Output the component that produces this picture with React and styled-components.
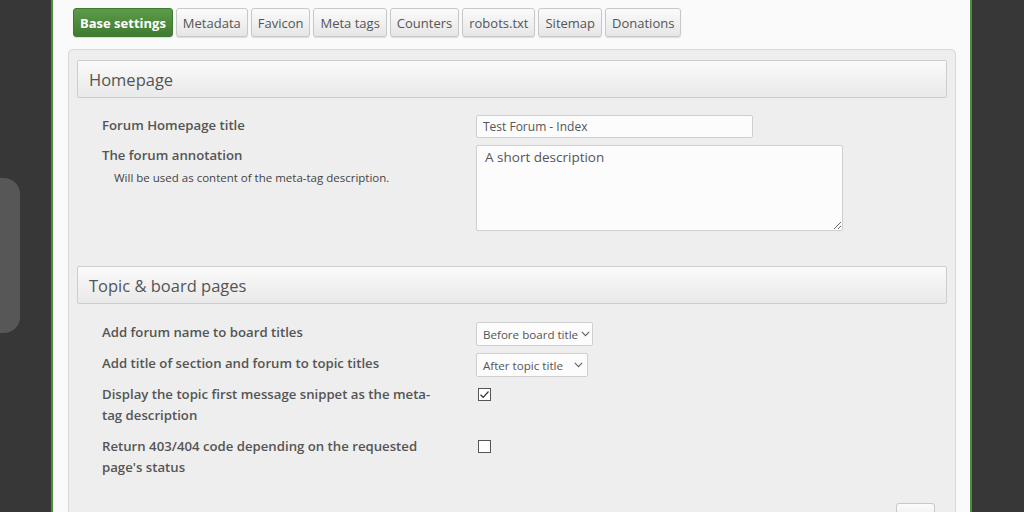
import React from 'react'
import styled, { createGlobalStyle } from 'styled-components'

const GlobalStyle = createGlobalStyle`
  html, body {
    margin: 0;
    padding: 0;
    background: #373737;
    overflow: hidden;
  }
  body {
    font-family: "Open Sans", "Liberation Sans", sans-serif;
  }
`

const tabs = ['Base settings', 'Metadata', 'Favicon', 'Meta tags', 'Counters', 'robots.txt', 'Sitemap', 'Donations']

const App = () => {
  return (
    <Page>
      <GlobalStyle />
      <Gutter>
        <SideHandle />
      </Gutter>
      <Main>
        <TabBar>
          {tabs.map((t, i) => (
            <Tab key={t} $active={i === 0}>{t}</Tab>
          ))}
        </TabBar>
        <Panel>
          <SectionHeader>Homepage</SectionHeader>
          <Rows>
            <Row>
              <Label>Forum Homepage title</Label>
              <TextInput defaultValue="Test Forum - Index" />
            </Row>
            <Row>
              <Label>
                The forum annotation
                <Hint>Will be used as content of the meta-tag description.</Hint>
              </Label>
              <TextArea defaultValue="A short description" />
            </Row>
          </Rows>

          <SectionHeader>Topic &amp; board pages</SectionHeader>
          <Rows $top={18}>
            <Row>
              <Label>Add forum name to board titles</Label>
              <SelectBox $width={117}>
                <span>Before board title</span>
                <Chevron />
              </SelectBox>
            </Row>
            <Row>
              <Label>Add title of section and forum to topic titles</Label>
              <SelectBox $width={112}>
                <span>After topic title</span>
                <Chevron />
              </SelectBox>
            </Row>
            <Row>
              <Label>Display the topic first message snippet as the meta-tag description</Label>
              <Check>
                <svg width="11" height="11" viewBox="0 0 11 11">
                  <path d="M1.5 5.8 L4.2 8.3 L9.5 2.5" fill="none" stroke="#333" strokeWidth="1.2" />
                </svg>
              </Check>
            </Row>
            <Row $spaced>
              <Label>Return 403/404 code depending on the requested page's status</Label>
              <Check />
            </Row>
          </Rows>
          <Footer>
            <SaveButton>Save</SaveButton>
          </Footer>
        </Panel>
      </Main>
      <RightSide />
    </Page>
  )
}

const Chevron = () => (
  <svg width="9" height="6" viewBox="0 0 9 6">
    <path d="M0.8 0.8 L4.5 4.6 L8.2 0.8" fill="none" stroke="#666" strokeWidth="1.2" />
  </svg>
)

export default App

const Page = styled.div`
  display: flex;
  width: 1024px;
  height: 512px;
  overflow: hidden;
`

const Gutter = styled.div`
  width: 51px;
  flex: none;
  padding-top: 178px;
  box-sizing: border-box;
`

const SideHandle = styled.div`
  width: 20px;
  height: 155px;
  background: #575757;
  border-radius: 0 16px 16px 0;
`

const Main = styled.div`
  width: 921px;
  flex: none;
  background: #fafafa;
  border-left: 2px solid #4b8f3b;
  border-right: 2px solid #4b8f3b;
  padding: 8px 14px 0 15px;
  box-sizing: border-box;
`

const RightSide = styled.div`
  flex: 1;
`

const TabBar = styled.div`
  display: flex;
  gap: 3px;
  padding-left: 5px;
  margin-bottom: 12px;
`

const Tab = styled.div`
  height: 29px;
  box-sizing: border-box;
  display: flex;
  align-items: center;
  font-size: 13px;
  border-radius: 3px;
  color: ${p => (p.$active ? '#fff' : '#555')};
  font-weight: ${p => (p.$active ? 700 : 400)};
  border: 1px solid ${p => (p.$active ? '#3f7a31' : '#c8c8c8')};
  background: ${p =>
    p.$active
      ? 'linear-gradient(#5c9c48, #3f7a31)'
      : 'linear-gradient(#fbfbfb, #e6e6e6)'};
  box-shadow: 0 1px 1px rgba(0, 0, 0, 0.12);
  padding: 0 6px;
`

const Panel = styled.div`
  background: #eeeeee;
  border: 1px solid #d8d8d8;
  border-radius: 5px;
  padding: 10px 8px 0 8px;
  height: 600px;
  box-sizing: border-box;
`

const SectionHeader = styled.div`
  height: 38px;
  box-sizing: border-box;
  border: 1px solid #cdcdcd;
  border-radius: 2px;
  background: linear-gradient(#fafafa, #e9e9e9);
  color: #555;
  font-size: 16.5px;
  display: flex;
  align-items: center;
  padding-left: 11px;
`

const Rows = styled.div`
  display: flex;
  flex-direction: column;
  gap: 7px;
  padding: ${p => p.$top || 17}px 0 35px 25px;
`

const Row = styled.div`
  display: grid;
  grid-template-columns: 374px 1fr;
  align-items: start;
  margin-top: ${p => (p.$spaced ? '3px' : '0')};
`

const Label = styled.div`
  font-size: 13.2px;
  font-weight: 600;
  color: #555;
  line-height: 21px;
  width: 345px;
`

const Hint = styled.div`
  font-size: 11.5px;
  font-weight: 400;
  color: #444;
  line-height: 18px;
  margin-top: 3px;
  padding-left: 12px;
`

const fieldBase = `
  box-sizing: border-box;
  border: 1px solid #cfcfcf;
  border-radius: 2px;
  background: #fcfcfc;
  font-family: "Open Sans", "Liberation Sans", sans-serif;
  color: #555;
  outline: none;
`

const TextInput = styled.input`
  ${fieldBase}
  width: 277px;
  height: 23px;
  font-size: 12px;
  padding: 0 6px;
`

const TextArea = styled.textarea`
  ${fieldBase}
  width: 367px;
  height: 86px;
  font-size: 13.5px;
  padding: 2px 8px;
  margin: 0;
  display: block;
`

const SelectBox = styled.div`
  ${fieldBase}
  width: ${p => p.$width}px;
  height: 24px;
  font-size: 11.6px;
  padding: 0 4px 0 6px;
  display: flex;
  align-items: center;
  justify-content: space-between;
  white-space: nowrap;
  overflow: hidden;
  span {
    margin-right: 3px;
  }
  svg {
    flex: none;
  }
`

const Check = styled.div`
  width: 13px;
  height: 13px;
  box-sizing: border-box;
  border: 1px solid #555;
  background: #fff;
  margin: 4px 0 0 2px;
  display: flex;
  align-items: center;
  justify-content: center;
  svg {
    display: block;
  }
`

const Footer = styled.div`
  display: flex;
  justify-content: flex-end;
  padding-right: 12px;
  margin-top: -10px;
`

const SaveButton = styled.div`
  width: 39px;
  height: 26px;
  box-sizing: border-box;
  border: 1px solid #c8c8c8;
  border-radius: 3px;
  background: linear-gradient(#fbfbfb, #e6e6e6);
  font-size: 13px;
  color: #555;
  display: flex;
  align-items: center;
  justify-content: center;
`
